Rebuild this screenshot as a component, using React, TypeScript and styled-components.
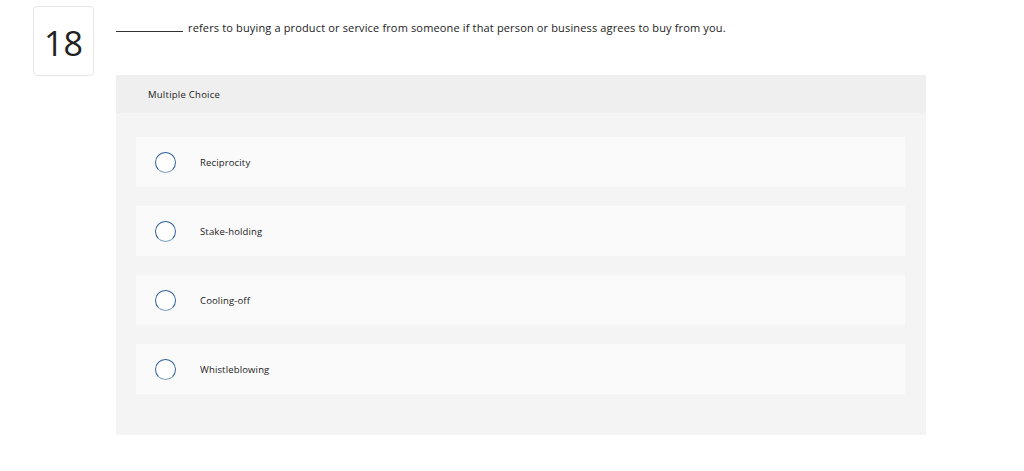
import React from "react";
import styled, { createGlobalStyle } from "styled-components";

const Global = createGlobalStyle`
  html, body { margin: 0; padding: 0; background: #ffffff; }
  body { font-family: "Open Sans", "Liberation Sans", sans-serif; color: #222; }
`;

const Page = styled.div`
  display: flex;
  align-items: flex-start;
  gap: 22px;
  padding: 6px 0 0 33px;
`;

const NumberBox = styled.div`
  width: 59px;
  height: 68px;
  box-sizing: content-box;
  border: 1px solid #e6e6e6;
  border-radius: 4px;
  display: flex;
  align-items: center;
  justify-content: center;
  padding-top: 0;
  font-family: "Open Sans", "Liberation Sans", sans-serif;
  font-size: 34px;
  font-weight: 400;
  line-height: 1;
  color: #222;
  flex-shrink: 0;
`;

const Digits = styled.span`
  display: block;
  transform: translateY(2px);
`;

const Main = styled.div`
  width: 810px;
  display: flex;
  flex-direction: column;
`;

const Question = styled.div`
  height: 69px;
  padding-top: 14px;
  box-sizing: border-box;
  font-size: 11px;
  letter-spacing: 0.15px;
  color: #222;
  display: flex;
  align-items: baseline;
  white-space: nowrap;
`;

const Blank = styled.span`
  display: inline-block;
  width: 67px;
  border-bottom: 1px solid #333;
  margin-right: 5px;
`;

const Panel = styled.div`
  background: #f4f4f4;
  padding-bottom: 41px;
`;

const PanelHeader = styled.div`
  background: #efefef;
  height: 38px;
  display: flex;
  align-items: center;
  padding-left: 32px;
  font-size: 9.5px;
  letter-spacing: 0.25px;
  color: #222;
`;

const Options = styled.div`
  display: flex;
  flex-direction: column;
  gap: 19px;
  padding: 24px 21px 0 20px;
`;

const Option = styled.label`
  height: 50px;
  background: #fafafa;
  display: flex;
  align-items: center;
  padding-left: 19px;
  font-size: 9.5px;
  letter-spacing: 0.15px;
  color: #222;
`;

const Radio = styled.span`
  width: 19px;
  height: 19px;
  border-radius: 50%;
  border: 1.5px solid #2c5f96;
  border-bottom-color: #7f9fc2;
  background: #ffffff;
  flex-shrink: 0;
  margin-right: 24px;
`;

const choices = ["Reciprocity", "Stake-holding", "Cooling-off", "Whistleblowing"];

export default function App() {
  return (
    <>
      <Global />
      <Page>
        <NumberBox>
          <Digits>18</Digits>
        </NumberBox>
        <Main>
          <Question>
            <Blank />
            refers to buying a product or service from someone if that person or business agrees to buy from you.
          </Question>
          <Panel>
            <PanelHeader>Multiple Choice</PanelHeader>
            <Options>
              {choices.map((c) => (
                <Option key={c}>
                  <Radio />
                  {c}
                </Option>
              ))}
            </Options>
          </Panel>
        </Main>
      </Page>
    </>
  );
}
